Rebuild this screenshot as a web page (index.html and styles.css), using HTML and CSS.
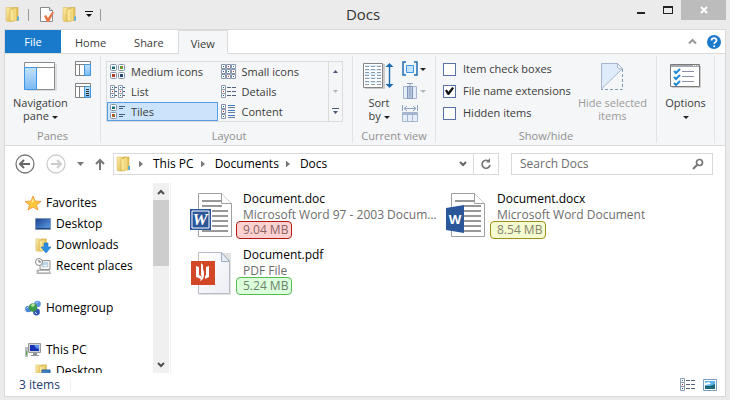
FILE: index.html
```html
<!DOCTYPE html>
<html lang="en">
<head>
  <meta charset="UTF-8">
  <title>Docs</title>
  <link rel="stylesheet" href="styles.css">
</head>
<body>
  <!-- shared icons -->
  <svg class="defs" width="0" height="0" aria-hidden="true">
    <defs>
      <linearGradient id="gold" x1="0" x2="1" y1="0" y2="1">
        <stop offset="0" stop-color="#fcf0b0"/>
        <stop offset="1" stop-color="#dfb64a"/>
      </linearGradient>
      <linearGradient id="sky" x1="0" x2="0" y1="0" y2="1">
        <stop offset="0" stop-color="#c4e2fb"/>
        <stop offset="1" stop-color="#79baf5"/>
      </linearGradient>
      <linearGradient id="screen" x1="0" x2="1" y1="0" y2="1">
        <stop offset="0" stop-color="#1c3f8e"/>
        <stop offset="1" stop-color="#5fa3ea"/>
      </linearGradient>
      <linearGradient id="paper" x1="0" x2="1" y1="0" y2="1">
        <stop offset="0" stop-color="#fff"/>
        <stop offset="1" stop-color="#eceef4"/>
      </linearGradient>
    </defs>
    <symbol id="folder" viewBox="0 0 16 16">
      <path d="M1 1h5l1 1v13H2l-1-1z" fill="url(#gold)" stroke="#dcbc62" stroke-width=".6"/>
      <path d="M7 1h6v13H7z" fill="#e6c45c" stroke="#cfa83f" stroke-width=".6"/>
      <path d="M5 3l4-1v13l-4-1z" fill="#f8e596" stroke="#d6b352" stroke-width=".6"/>
      <path d="M9 2h2v12H9z" fill="#f3da80"/>
      <path d="M12 10h2v4h-2z" fill="#5eb0d8"/>
    </symbol>
    <symbol id="thumb" viewBox="0 0 7 7">
      <rect x=".5" y=".5" width="6" height="6" rx="1" fill="#fff" stroke="#8492ab"/>
    </symbol>
    <symbol id="list" viewBox="0 0 15 14">
      <path d="M.5.5h4v4h-4zM.5 4.500h4v4h-4zM.5 8.500h4v4h-4z" fill="#fff" stroke="#8c9ab2"/>
      <path d="M2 2h1v1H2z" fill="#17805c"/>
      <path d="M2 6h1v1H2z" fill="#d02b20"/>
      <path d="M2 10h1v1H2z" fill="#2060c0"/>
      <path d="M6 2.500h4M11 2.500h4M6 6.500h4M11 6.500h4M6 10.500h4M11 10.500h4" stroke="#52627f"/>
    </symbol>
    <symbol id="crumb" viewBox="0 0 5 8">
      <path d="M0 0l5 4-5 4z" fill="#777"/>
    </symbol>
  </svg>

  <div class="window">
    <header class="titlebar">
      <div class="quick">
        <svg width="16" height="17"><use href="#folder"/></svg>
        <span class="sep"></span>
        <button aria-label="Properties"><svg width="16" height="17" viewBox="0 0 16 17">
          <path d="M1.500 1.500h9l3 3v11h-12z" fill="#fff" stroke="#8a8a8a"/>
          <path d="M10.500 1.500v3h3" fill="#eee" stroke="#8a8a8a"/>
          <path d="M5 10l2-1 2 3 4-6 2 0-5 10H8z" fill="#e87648"/>
        </svg></button>
        <button aria-label="New folder"><svg width="16" height="17"><use href="#folder"/></svg></button>
        <button aria-label="Customize"><svg width="8" height="7" viewBox="0 0 8 7">
          <path d="M0 0h8v1H0zM1 3h6L4 6z" fill="#111"/>
        </svg></button>
        <span class="sep"></span>
      </div>
      <h1>Docs</h1>
      <div class="controls">
        <button aria-label="Minimize"><svg width="10" height="10" viewBox="0 0 10 10"><path d="M1 7h8v2H1z" fill="#222"/></svg></button>
        <button aria-label="Maximize"><svg width="10" height="10" viewBox="0 0 10 10"><path d="M0 1h10v8H0zM1 3v5h8V3z" fill="#222" fill-rule="evenodd"/></svg></button>
        <button class="close" aria-label="Close"><svg width="8" height="8" viewBox="0 0 8 8"><path d="M1 1l6 6M7 1L1 7" stroke="#fff" stroke-width="2"/></svg></button>
      </div>
    </header>

    <div class="frame">
      <nav class="tabs">
        <button class="tab file">File</button>
        <button class="tab">Home</button>
        <button class="tab">Share</button>
        <button class="tab active">View</button>
        <div class="tabs-end">
          <button aria-label="Minimize the ribbon"><svg width="9" height="7" viewBox="0 0 9 7"><path d="M1 5.500L4.500 2 8 5.500" fill="none" stroke="#999" stroke-width="2"/></svg></button>
          <button aria-label="Help"><svg width="14" height="14" viewBox="0 0 14 14">
            <circle cx="7" cy="7" r="7" fill="#1979ca"/>
            <path d="M4.500 5.500c0-3.200 5-3.200 5 0 0 1.700-2.300 1.500-2.300 3.400" fill="none" stroke="#fff" stroke-width="1.700"/>
            <circle cx="7.200" cy="11.200" r="1" fill="#fff"/>
          </svg></button>
        </div>
      </nav>

      <div class="ribbon">
        <section class="group panes">
          <div class="group-body">
            <button class="big">
              <svg width="33" height="30" viewBox="0 0 33 30">
                <path d="M3 3h30v27H3z" fill="#ddd"/>
                <path d="M.5 1.500h30v27H.5z" fill="#fff" stroke="#8c8c8c"/>
                <path d="M1 6.500h30" stroke="#8c8c8c"/>
                <path d="M.5 6.500h12v22H.5z" fill="url(#sky)" stroke="#4096e0"/>
              </svg>
              <span>Navigation<br>pane <i class="arrow"></i></span>
            </button>
            <div class="pane-toggles">
              <button aria-label="Preview pane"><svg width="16" height="16" viewBox="0 0 16 16">
                <path d="M.5.5h15v14H.5z" fill="#fff" stroke="#808080"/>
                <path d="M1 3.500h14M4.500 4v10" stroke="#808080"/>
                <path d="M9.500 3.500h6v11h-6z" fill="url(#sky)" stroke="#4096e0"/>
              </svg></button>
              <button aria-label="Details pane"><svg width="16" height="16" viewBox="0 0 16 16">
                <path d="M.5.5h15v14H.5z" fill="#fff" stroke="#808080"/>
                <path d="M1 3.500h14M4.500 4v10" stroke="#808080"/>
                <path d="M9.500 3.500h6v11h-6z" fill="url(#sky)" stroke="#4096e0"/>
                <path d="M11 6.500h3M11 8.500h3M11 10.500h3M11 12.500h3" stroke="#333"/>
              </svg></button>
            </div>
          </div>
          <h2>Panes</h2>
        </section>

        <section class="group layout">
          <div class="gallery">
            <div class="views">
              <button><svg width="15" height="15" viewBox="0 0 15 15">
                <use href="#thumb" width="7" height="7"/><use href="#thumb" x="8" width="7" height="7"/>
                <use href="#thumb" y="8" width="7" height="7"/><use href="#thumb" x="8" y="8" width="7" height="7"/>
                <path d="M2 2h3v1H2z" fill="#7bb8e8"/><path d="M2 3h3v2H2z" fill="#176c6a"/>
                <path d="M10 2h3v3h-3z" fill="#5aa832"/><path d="M10 4h1v1h-1zM12 2h1v1h-1z" fill="#e04a20"/>
                <path d="M2 10h3v3H2z" fill="#b83a22"/><path d="M10 10h3v3h-3z" fill="#26477e"/>
              </svg>Medium icons</button>
              <button><svg width="15" height="15" viewBox="0 0 15 15">
                <path d="M.5.500h4v4h-4zM5.500.500h4v4h-4zM10.500.500h4v4h-4zM.5 5.500h4v4h-4zM5.500 5.500h4v4h-4zM10.500 5.500h4v4h-4zM.5 10.500h4v4h-4zM5.500 10.500h4v4h-4zM10.500 10.500h4v4h-4z" fill="#fff" stroke="#8492ab"/>
                <path d="M2 2h1v1H2zM12 2h1v1h-1zM7 7h1v1H7zM2 12h1v1H2z" fill="#17805c"/>
                <path d="M7 2h1v1H7zM12 7h1v1h-1zM7 12h1v1H7z" fill="#c43a26"/>
                <path d="M2 7h1v1H2zM12 12h1v1h-1z" fill="#2060c0"/>
              </svg>Small icons</button>
              <button><svg width="15" height="14" viewBox="0 0 15 14">
                <path d="M.5.5h4v4h-4zM.5 4.500h4v4h-4zM.5 8.500h4v4h-4zM8.500.5h4v4h-4zM8.500 4.500h4v4h-4zM8.500 8.500h4v4h-4z" fill="#fff" stroke="#8c9ab2"/>
                <path d="M2 2h1v1H2zM10 10h1v1h-1z" fill="#17805c"/>
                <path d="M2 6h1v1H2zM10 6h1v1h-1z" fill="#d02b20"/>
                <path d="M2 10h1v1H2zM10 2h1v1h-1z" fill="#2060c0"/>
                <path d="M5 2.500h2M5 6.500h2M5 10.500h2M13 2.500h2M13 6.500h2M13 10.500h2" stroke="#52627f"/>
              </svg>List</button>
              <button><svg width="15" height="14"><use href="#list"/></svg>Details</button>
              <button class="selected"><svg width="15" height="15" viewBox="0 0 15 15">
                <use href="#thumb" width="7" height="7"/><use href="#thumb" y="8" width="7" height="7"/>
                <path d="M2 2h3v1H2z" fill="#7bb8e8"/><path d="M2 3h3v2H2z" fill="#176c6a"/>
                <path d="M2 10h3v3H2z" fill="#c8402a"/><path d="M4 10h1v2H4zM2 12h1v1H2z" fill="#5aa832"/>
                <path d="M9 2.500h6M9 4.500h4M9 10.500h6M9 12.500h4" stroke="#40597f"/>
              </svg>Tiles</button>
              <button><svg width="15" height="15" viewBox="0 0 15 15">
                <path d="M.5.500h4v4h-4zM.5 5.500h4v4h-4zM.5 10.500h4v4h-4z" fill="#fff" stroke="#8492ab"/>
                <path d="M2 2h1v1H2zM2 12h1v1H2z" fill="#17805c"/><path d="M2 7h1v1H2z" fill="#d02b20"/>
                <path d="M7 1.500h7M7 6.500h7M7 11.500h7" stroke="#4378c4"/>
                <path d="M7 3.500h7M7 8.500h7M7 13.500h7" stroke="#6b7f9e"/>
              </svg>Content</button>
            </div>
            <div class="gallery-scroll">
              <button aria-label="Row up"><svg width="5" height="3" viewBox="0 0 5 3"><path d="M0 3h5L2.500 0z" fill="#4a5a78"/></svg></button>
              <button aria-label="Row down" disabled><svg width="5" height="3" viewBox="0 0 5 3"><path d="M0 0h5L2.500 3z" fill="#b0b5c0"/></svg></button>
              <button aria-label="More"><svg width="7" height="6" viewBox="0 0 7 6"><path d="M0 0h7v1H0zM1 3h5L3.500 6z" fill="#4a5a78"/></svg></button>
            </div>
          </div>
          <h2>Layout</h2>
        </section>

        <section class="group current">
          <div class="group-body">
            <button class="big">
              <svg width="32" height="30" viewBox="0 0 32 30">
                <path d="M2 3h20v25H2z" fill="#ccc"/>
                <path d="M.5 2.500h19v24H.5z" fill="#fff" stroke="#858585"/>
                <path d="M2 4h16v2H2zM2 8h16v2H2zM2 12h16v2H2zM2 16h16v2H2zM2 20h16v2H2z" fill="#dceefb"/>
                <path d="M2 5.500h16M2 8.500h16M2 11.500h16M2 14.500h16M2 17.500h16M2 20.500h16M2 23.500h16" stroke="#8e9aa8" stroke-dasharray="4 2"/>
                <path d="M26.500 4v21" stroke="#1c6cb0" stroke-width="1.400"/>
                <path d="M22.500 6l4-4 4 4zM22.500 23l4 4 4-4z" fill="#1c6cb0"/>
              </svg>
              <span>Sort<br>by <i class="arrow"></i></span>
            </button>
            <div class="view-tools">
              <button aria-label="Group by"><svg width="16" height="16" viewBox="0 0 16 16">
                <path d="M4 1H1v13h3M12 1h3v13h-3" fill="none" stroke="#1c6cb0" stroke-width="1.500"/>
                <path d="M4.500 4.500h7v7h-7z" fill="#c5e2fb" stroke="#3b97ee"/>
              </svg><i class="arrow"></i></button>
              <button aria-label="Add columns" disabled><svg width="16" height="16" viewBox="0 0 16 16">
                <path d="M1.500 3.500h13v12h-13z" fill="#e5edf8" stroke="#a5b5cf"/>
                <path d="M5.500 3.500h5v12h-5z" fill="#b9c9e2" stroke="#8296b8"/>
                <path d="M8 1v13M5 .5h6" stroke="#8ca0c0"/>
              </svg><i class="arrow"></i></button>
              <button aria-label="Size all columns to fit" disabled><svg width="16" height="17" viewBox="0 0 16 17">
                <path d="M.5 0v6M15.500 0v6M3 3.500h10M5 1L2 3.500 5 6M11 1l3 2.500L11 6" fill="none" stroke="#8ca0c0"/>
                <path d="M.5 7.500h15v9H.5z" fill="#e5edf8" stroke="#a5b5cf"/>
                <path d="M0 8h16v2H0z" fill="#a5b5cf"/>
                <path d="M5.500 10v6M10.500 10v6" stroke="#a5b5cf"/>
              </svg></button>
            </div>
          </div>
          <h2>Current view</h2>
        </section>

        <section class="group showhide">
          <div class="group-body">
            <div class="checks">
              <label><input type="checkbox">Item check boxes</label>
              <label><input type="checkbox" checked>File name extensions</label>
              <label><input type="checkbox">Hidden items</label>
            </div>
            <button class="big" disabled>
              <svg width="23" height="30" viewBox="0 0 23 30">
                <path d="M.5 28V2.500h16l5 5L.5 28z" fill="#dfebfb"/>
                <path d="M.5 28V2.500h16l5 5L.5 28" fill="none" stroke="#a5b5cf"/>
                <path d="M16.500 2.500v4c2 2 4 1 5 1z" fill="#f8fbff" stroke="#a5b5cf"/>
                <path d="M21.500 8v20.500H.5" fill="none" stroke="#8496b6" stroke-dasharray="3 2"/>
              </svg>
              <span>Hide selected<br>items</span>
            </button>
          </div>
          <h2>Show/hide</h2>
        </section>

        <section class="group options">
          <div class="group-body">
            <button class="big">
              <svg width="31" height="30" viewBox="0 0 31 30">
                <path d="M2 5h29v22H2z" fill="#ccc"/>
                <path d="M.5 3.500h29v22H.5z" fill="#fff" stroke="#7a7a7a"/>
                <path d="M1 4h28v2H1z" fill="#a5a8b2"/>
                <path d="M23 4.500h1M25 4.500h1M27 4.500h1" stroke="#fff"/>
                <path d="M4 10l2 2 4-4M4 16l2 2 4-4M4 22l2 2 4-4" fill="none" stroke="#2389d0" stroke-width="2"/>
                <path d="M12 10.500h12M12 15.500h12M12 20.500h12" stroke="#8b8ea8"/>
              </svg>
              <span>Options<br><i class="arrow"></i></span>
            </button>
          </div>
        </section>
      </div>

      <div class="navbar">
        <div class="history">
          <button aria-label="Back"><svg width="20" height="20" viewBox="0 0 20 20">
            <circle cx="10" cy="10" r="9" fill="#fff" stroke="#777" stroke-width="1.300"/>
            <path d="M5 10h10M9 6l-4 4 4 4" fill="none" stroke="#666" stroke-width="2"/>
          </svg></button>
          <button aria-label="Forward" disabled><svg width="20" height="20" viewBox="0 0 20 20">
            <circle cx="10" cy="10" r="9" fill="#fff" stroke="#ccc" stroke-width="1.300"/>
            <path d="M5 10h10M11 6l4 4-4 4" fill="none" stroke="#ccc" stroke-width="2"/>
          </svg></button>
          <button aria-label="Recent locations"><svg width="7" height="4" viewBox="0 0 7 4"><path d="M0 0h7L3.500 4z" fill="#777"/></svg></button>
          <button aria-label="Up"><svg width="10" height="12" viewBox="0 0 10 12">
            <path d="M5 12V2M1 6l4-4 4 4" fill="none" stroke="#777" stroke-width="2"/>
          </svg></button>
        </div>
        <div class="address">
          <svg width="16" height="16"><use href="#folder"/></svg>
          <svg class="crumb" width="4" height="8"><use href="#crumb"/></svg>
          <a href="#">This PC</a>
          <svg class="crumb" width="4" height="8"><use href="#crumb"/></svg>
          <a href="#">Documents</a>
          <svg class="crumb" width="4" height="8"><use href="#crumb"/></svg>
          <a href="#">Docs</a>
          <button class="drop" aria-label="Previous locations"><svg width="8" height="6" viewBox="0 0 8 6"><path d="M1 1l3 3 3-3" fill="none" stroke="#666" stroke-width="2"/></svg></button>
          <button class="refresh" aria-label="Refresh"><svg width="12" height="12" viewBox="0 0 12 12">
            <path d="M9 3.500A4 4 0 1 0 10 7" fill="none" stroke="#777" stroke-width="1.700"/>
            <path d="M6 4.500h4V0z" fill="#777"/>
          </svg></button>
        </div>
        <div class="search">
          <input type="text" placeholder="Search Docs" aria-label="Search Docs">
          <svg width="12" height="12" viewBox="0 0 12 12">
            <circle cx="7.500" cy="4.500" r="3" fill="none" stroke="#777" stroke-width="1.700"/>
            <path d="M5.500 6.500L1 11" stroke="#777" stroke-width="2.200"/>
          </svg>
        </div>
      </div>

      <div class="main">
        <aside class="sidebar">
          <div class="tree">
            <ul>
              <li><a href="#"><svg width="16" height="16" viewBox="0 0 16 16">
                <path d="M8 1l2 5 6 .5-4.500 3.500L13 15l-5-3-5 3 1.500-5L0 6.500 6 6z" fill="#ffc83c" stroke="#ef8f31" stroke-width=".8"/>
                <path d="M8 3l1 4H4l3-.5z" fill="#fff0a0"/>
              </svg>Favorites</a></li>
              <li class="child"><a href="#"><svg width="16" height="16" viewBox="0 0 16 16">
                <path d="M.5 2.500h15v11H.5z" fill="url(#screen)" stroke="#7f96bd"/>
                <path d="M1 12h14v1H1z" fill="#26416e"/>
              </svg>Desktop</a></li>
              <li class="child"><a href="#"><svg width="16" height="16" viewBox="0 0 16 16">
                <use href="#folder" width="14" height="16"/>
                <path d="M9 6h4v4h3l-5 6-5-6h3z" fill="#2c8ee4" stroke="#1b6fbe" stroke-width=".6"/>
              </svg>Downloads</a></li>
              <li class="child"><a href="#"><svg width="16" height="16" viewBox="0 0 16 16">
                <path d="M5 2.500h10v9H5z" fill="#eee" stroke="#999"/>
                <path d="M7 4h6v5H7z" fill="#b9d4e8"/>
                <path d="M2 12h12l1.500 3.500H2z" fill="#ccc" stroke="#888" stroke-width=".6"/>
                <path d="M4 13.500h10M9 7.500h3M8 10.500h5" stroke="#fff"/>
                <circle cx="4" cy="4" r="3.500" fill="#fafafa" stroke="#8b8b8b"/>
                <path d="M4 2v2h2" fill="none" stroke="#667"/>
              </svg>Recent places</a></li>
            </ul>
            <ul>
              <li><a href="#"><svg width="16" height="16" viewBox="0 0 16 16">
                <circle cx="3.500" cy="9" r="3.300" fill="#4c86d8"/>
                <circle cx="12.500" cy="4" r="3.300" fill="#5b8fdf"/>
                <circle cx="11.500" cy="12" r="3.400" fill="#2f56b4"/>
                <circle cx="8" cy="7.500" r="4.200" fill="#3d9a48"/>
                <path d="M6 6c1-3 3-3 4-1-1 1-2 3-4 1z" fill="#b7e5a0"/>
                <path d="M1.500 8.500l2-2M11 3l2-1M10 12l2 2" stroke="#c6dcfa"/>
              </svg>Homegroup</a></li>
            </ul>
            <ul>
              <li><a href="#"><svg width="16" height="16" viewBox="0 0 16 16">
                <path d="M3.500 1.500h12v9h-12z" fill="#cfd3d8" stroke="#999"/>
                <path d="M5 3h9v6H5z" fill="#1732b4"/>
                <path d="M9 3h5v4l-3-1z" fill="#5b92f0"/>
                <path d="M8 11h4v2h2v1H6v-1h2z" fill="#8e949c"/>
                <path d="M0 5h3v10H0z" fill="#b7bcc2"/>
                <path d="M1 9h1v4H1z" fill="#4cae3a"/>
              </svg>This PC</a></li>
              <li class="child"><a href="#"><svg width="16" height="16" viewBox="0 0 16 16">
                <use href="#folder" width="14" height="16"/>
                <path d="M7 7h8v6H7z" fill="#3f7fc4" stroke="#2e619c"/>
              </svg>Desktop</a></li>
            </ul>
          </div>
          <div class="scrollbar">
            <button aria-label="Scroll up"><svg width="8" height="6" viewBox="0 0 8 6"><path d="M1 5l3-3 3 3" fill="none" stroke="#505050" stroke-width="2"/></svg></button>
            <div class="track"><div class="thumb"></div></div>
            <button aria-label="Scroll down"><svg width="8" height="6" viewBox="0 0 8 6"><path d="M1 1l3 3 3-3" fill="none" stroke="#505050" stroke-width="2"/></svg></button>
          </div>
        </aside>

        <ul class="files">
          <li class="item">
            <svg width="42" height="46" viewBox="0 0 42 46">
              <path d="M8.500 2.500h23l10 10v33h-33z" fill="#fff" stroke="#a0a0a0"/>
              <path d="M31.500 2.500v10h10" fill="#fff" stroke="#a0a0a0"/>
              <path d="M12 10h20M12 15h20M22 20h16M22 25h16M22 30h16M22 35h16M12 40h26" stroke="#989898" stroke-width="2"/>
              <path d="M0 18h21v21H0z" fill="#2b579a"/>
              <path d="M2 20h17v17H2z" fill="none" stroke="#fff"/>
              <text class="w-serif" x="10" y="34">W</text>
            </svg>
            <div class="info">
              <span class="name">Document.doc</span>
              <span class="type">Microsoft Word 97 - 2003 Document</span>
              <span class="size red">9.04 MB</span>
            </div>
          </li>
          <li class="item">
            <svg width="42" height="46" viewBox="0 0 42 46">
              <path d="M7.500 2.500h23l10 10v33h-33z" fill="#fff" stroke="#a0a0a0"/>
              <path d="M30.500 2.500v10h10" fill="#fff" stroke="#a0a0a0"/>
              <path d="M11 10h20M20 15h17M20 20h17M20 25h17M20 30h17M20 35h17M20 40h17" stroke="#989898" stroke-width="2"/>
              <path d="M2 17l18-3v28L2 39z" fill="#2b579a"/>
              <text class="w-sans" x="11" y="33">W</text>
            </svg>
            <div class="info">
              <span class="name">Document.docx</span>
              <span class="type">Microsoft Word Document</span>
              <span class="size yellow">8.54 MB</span>
            </div>
          </li>
          <li class="item">
            <svg width="42" height="48" viewBox="0 0 42 48">
              <path d="M9 6h32v42H9z" fill="#e2e2e2"/>
              <path d="M8.500 5.500h23l8 9v32h-31z" fill="url(#paper)" stroke="#b8bcc6"/>
              <path d="M31.500 5.500v9h8z" fill="#e8eef5" stroke="#9dacbd"/>
              <path d="M1 14h24v24H1z" fill="#d24726"/>
              <path d="M6 19l3 1v8l2 1v3l-5-2z" fill="#fff"/>
              <path d="M16 20l3-1v11l-4 2v-3l1-1z" fill="#fff"/>
              <path d="M11 16l2 2v4l1 3v3c0 3-1 5-4 6 1-3 2-4 1-7z" fill="#fff"/>
            </svg>
            <div class="info">
              <span class="name">Document.pdf</span>
              <span class="type">PDF File</span>
              <span class="size green">5.24 MB</span>
            </div>
          </li>
        </ul>
      </div>

      <footer class="status">
        <span class="count">3 items</span>
        <div class="modes">
          <button aria-label="Details view"><svg width="15" height="14"><use href="#list"/></svg></button>
          <button aria-label="Large icons view"><svg width="14" height="12" viewBox="0 0 14 12">
            <path d="M.5.5h13v11H.5z" fill="#fff" stroke="#7d9ac0"/>
            <path d="M2 2h10v8H2z" fill="#5fb4ea"/>
            <path d="M2 4l4-1 2 2-6 1z" fill="#fff"/>
            <path d="M2 7l5 0 5-2v5H2z" fill="#1b6878"/>
          </svg></button>
        </div>
      </footer>
    </div>
  </div>
</body>
</html>
```
FILE: styles.css
```css
* {
  box-sizing: border-box;
}

body {
  margin: 0;
  background: #ebebeb;
  color: #000;
  font-family: "Open Sans", "Noto Sans", sans-serif;
  font-size: 12px;
  line-height: 16px;
}

h1, h2, ul {
  margin: 0;
  padding: 0;
  font-weight: normal;
}

ul {
  list-style: none;
}

a {
  color: inherit;
  text-decoration: none;
}

button {
  display: flex;
  align-items: center;
  justify-content: center;
  padding: 0;
  border: none;
  background: none;
  color: inherit;
  font: inherit;
}

svg {
  display: block;
  flex: none;
}

.defs {
  position: absolute;
}

.window {
  display: flex;
  flex-direction: column;
  height: 100vh;
  padding: 0 4px 3px;
}

/* title bar */
.titlebar {
  display: grid;
  grid-template-columns: 1fr auto 1fr;
  height: 29px;
  margin-left: -4px;
}

.titlebar h1 {
  font-size: 15px;
  line-height: 29px;
  color: #333;
}

.quick {
  display: flex;
  align-items: center;
  gap: 7px;
  padding-left: 5px;
}

.sep {
  width: 1px;
  height: 12px;
  margin-right: 3px;
  background: #999;
}

.controls {
  display: flex;
  justify-content: flex-end;
  height: 20px;
}

.controls button {
  width: 27px;
}

.controls .close {
  width: 45px;
  background: #bcbcbc;
}

.frame {
  flex: 1;
  min-height: 0;
  display: flex;
  flex-direction: column;
  border: 1px solid #d9d9d9;
  background: #fff;
}

/* tabs */
.tabs {
  display: flex;
  height: 24px;
  border-bottom: 1px solid #dadbdc;
  color: #3b3b3b;
  font-size: 11px;
}

.tab {
  padding: 2px 14px 0;
}

.tab.file {
  width: 56px;
  padding-top: 0;
  background: #1979ca;
  color: #fff;
}

.tab.active {
  height: 24px;
  padding: 2px 12px 0;
  border: 1px solid #dadbdc;
  border-bottom: none;
  background: #f5f6f7;
}

.tabs-end {
  display: flex;
  align-items: center;
  gap: 10px;
  margin-left: auto;
  padding-right: 4px;
}

/* ribbon */
.ribbon {
  display: flex;
  height: 92px;
  padding: 2px 0;
  border-bottom: 1px solid #dadbdc;
  background: #f5f6f7;
  color: #3b3b3b;
  font-size: 11px;
}

.group {
  display: flex;
  flex-direction: column;
  justify-content: space-between;
  padding-top: 5px;
  border-right: 1px solid #e2e3e4;
}

.group h2 {
  font-size: 11px;
  line-height: 14px;
  color: #8f8f8f;
  text-align: center;
}

.group-body {
  display: flex;
}

.panes {
  width: 96px;
}

.panes .group-body {
  gap: 7px;
  padding-left: 8px;
}

.layout {
  width: 252px;
  padding-left: 5px;
}

.current {
  width: 83px;
}

.current .group-body {
  gap: 7px;
  padding-left: 10px;
}

.showhide {
  width: 221px;
}

.showhide .group-body {
  justify-content: space-between;
  padding: 0 9px 0 7px;
}

.options {
  width: 58px;
}

.options .group-body {
  justify-content: center;
}

.big {
  flex-direction: column;
  justify-content: flex-start;
  gap: 5px;
  line-height: 13px;
  white-space: nowrap;
}

.big:disabled {
  color: #9a9a9a;
}

.arrow {
  display: inline-block;
  vertical-align: middle;
  border: 3px solid transparent;
  border-top-color: #222;
  border-bottom: none;
}

:disabled .arrow {
  border-top-color: #b5b5b5;
}

.pane-toggles {
  display: flex;
  flex-direction: column;
  gap: 6px;
}

.view-tools {
  display: flex;
  flex-direction: column;
  align-items: flex-start;
  gap: 6px;
}

.view-tools button {
  gap: 2px;
}

.gallery {
  display: flex;
  width: 237px;
  border: 1px solid #dadbdc;
}

.views {
  flex: 1;
  display: grid;
  grid-template-columns: 1fr 1fr;
  grid-auto-rows: 19px;
  row-gap: 1px;
}

.views button {
  justify-content: flex-start;
  gap: 6px;
  padding-left: 2px;
  border: 1px solid transparent;
}

.views .selected {
  border-color: #569de5;
  background: #cce4fb;
}

.gallery-scroll {
  display: grid;
  grid-template-rows: repeat(3, 1fr);
  width: 14px;
  border-left: 1px solid #dadbdc;
}

.checks {
  display: flex;
  flex-direction: column;
  gap: 6px;
}

.checks label {
  display: flex;
  align-items: center;
  gap: 7px;
  white-space: nowrap;
}

.checks input {
  appearance: none;
  display: flex;
  align-items: center;
  justify-content: center;
  width: 13px;
  height: 13px;
  margin: 0;
  border: 1px solid #5b71a3;
  background: #fff;
}

.checks input:checked::before {
  content: "";
  width: 9px;
  height: 8px;
  background: #111;
  clip-path: polygon(0 45%, 20% 32%, 38% 60%, 80% 0, 100% 15%, 45% 100%, 30% 100%);
}

/* address row */
.navbar {
  display: flex;
  align-items: center;
  gap: 12px;
  padding: 7px 12px 6px 10px;
}

.history {
  display: flex;
  align-items: center;
  gap: 11px;
  margin-right: -4px;
}

.address {
  flex: 1;
  display: flex;
  align-items: center;
  height: 22px;
  padding-left: 2px;
  border: 1px solid #d9d9d9;
}

.crumb {
  margin: 0 10px 0 7px;
}

.address .drop {
  width: 20px;
  height: 20px;
  margin-left: auto;
}

.address .refresh {
  width: 25px;
  height: 20px;
  border-left: 1px solid #d9d9d9;
}

.search {
  display: flex;
  align-items: center;
  width: 202px;
  height: 22px;
  padding: 0 8px;
  border: 1px solid #d9d9d9;
}

.search input {
  flex: 1;
  min-width: 0;
  padding: 0;
  border: none;
  outline: none;
  font: inherit;
}

.search input::placeholder {
  color: #6d6d6d;
}

/* tree and files */
.main {
  flex: 1;
  min-height: 0;
  display: flex;
  padding-top: 2px;
}

.sidebar {
  display: flex;
  width: 166px;
  border-right: 1px solid #f0f0f0;
}

.tree {
  flex: 1;
  display: flex;
  flex-direction: column;
  gap: 21px;
  padding: 9px 0 0 20px;
  overflow: hidden;
}

.tree a {
  display: flex;
  align-items: center;
  gap: 5px;
  height: 21px;
  white-space: nowrap;
}

.tree .child {
  padding-left: 10px;
}

.scrollbar {
  display: flex;
  flex-direction: column;
  width: 17px;
  padding-right: 1px;
}

.scrollbar button,
.track {
  background: #f0f0f0;
}

.scrollbar button {
  height: 17px;
}

.track {
  flex: 1;
}

.thumb {
  height: 42%;
  background: #cdcdcd;
}

.files {
  flex: 1;
  display: grid;
  grid-template-columns: 254px 254px;
  grid-auto-rows: 48px;
  row-gap: 8px;
  padding: 8px 0 0 19px;
}

.item {
  display: flex;
  gap: 11px;
  padding-right: 2px;
}

.info {
  flex: 1;
  min-width: 0;
  display: flex;
  flex-direction: column;
  align-items: flex-start;
}

.type {
  max-width: 100%;
  overflow: hidden;
  white-space: nowrap;
  text-overflow: ellipsis;
  color: #6d6d6d;
}

.size {
  height: 18px;
  margin: -2px 0 0 -7px;
  padding: 0 3px 0 6px;
  border: 1px solid;
  border-radius: 4px;
  color: #6d6d6d;
}

.red {
  border-color: #b01818;
  background: #ffd2d2;
  color: #8c6262;
}

.yellow {
  border-color: #a09018;
  background: #f5fbd0;
  color: #85856a;
}

.green {
  border-color: #55bb55;
  background: #dcffdc;
  color: #6a836a;
}

.w-serif {
  font: italic bold 17px "Liberation Serif", serif;
  text-anchor: middle;
  fill: #fff;
}

.w-sans {
  font: bold 13px "Open Sans", sans-serif;
  text-anchor: middle;
  fill: #fff;
}

/* status bar */
.status {
  display: flex;
  align-items: center;
  justify-content: space-between;
  height: 23px;
  padding: 0 8px 0 14px;
  color: #1e3c6e;
}

.count {
  padding-right: 10px;
  border-right: 1px solid #f0f0f0;
  line-height: 12px;
}

.modes {
  display: flex;
  align-items: center;
  gap: 8px;
}
```
